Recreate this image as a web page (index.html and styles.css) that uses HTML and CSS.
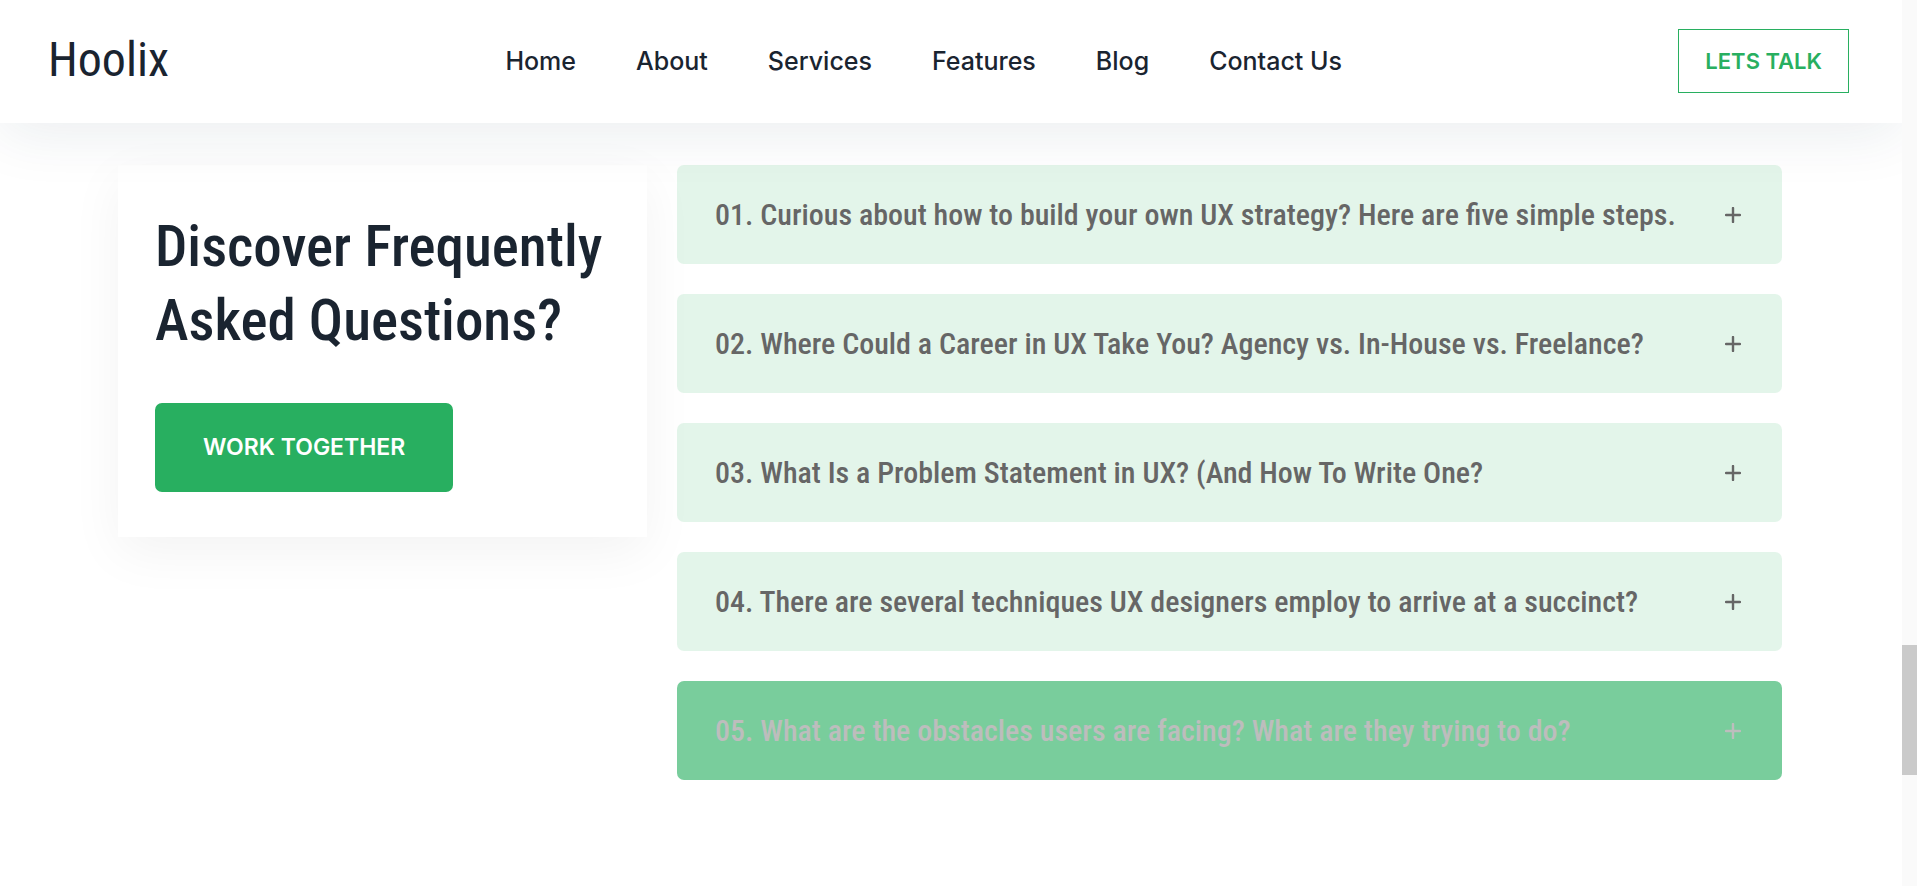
FILE: index.html
```html
<!DOCTYPE html>
<html lang="en">
<head>
<meta charset="utf-8">
<meta name="viewport" content="width=device-width, initial-scale=1">
<title>Hoolix</title>
<link rel="stylesheet" href="styles.css">
</head>
<body>
<div class="page">
  <header class="header">
    <a class="logo" href="#">Hoolix</a>
    <nav class="nav">
      <a href="#">Home</a>
      <a href="#">About</a>
      <a href="#">Services</a>
      <a href="#">Features</a>
      <a href="#">Blog</a>
      <a href="#">Contact Us</a>
    </nav>
    <a class="talk" href="#">LETS TALK</a>
  </header>
  <main class="faq">
    <section class="intro">
      <h2 class="title">Discover Frequently Asked Questions?</h2>
      <a class="cta" href="#">WORK TOGETHER</a>
    </section>
    <section class="list">
      <button class="item" type="button"><span>01. Curious about how to build your own UX strategy? Here are five simple steps.</span><svg class="plus" viewBox="0 0 16 16" aria-hidden="true"><path d="M8 1v14M1 8h14"/></svg></button>
      <button class="item" type="button"><span>02. Where Could a Career in UX Take You? Agency vs. In-House vs. Freelance?</span><svg class="plus" viewBox="0 0 16 16" aria-hidden="true"><path d="M8 1v14M1 8h14"/></svg></button>
      <button class="item" type="button"><span>03. What Is a Problem Statement in UX? (And How To Write One?</span><svg class="plus" viewBox="0 0 16 16" aria-hidden="true"><path d="M8 1v14M1 8h14"/></svg></button>
      <button class="item" type="button"><span>04. There are several techniques UX designers employ to arrive at a succinct?</span><svg class="plus" viewBox="0 0 16 16" aria-hidden="true"><path d="M8 1v14M1 8h14"/></svg></button>
      <button class="item item-active" type="button"><span>05. What are the obstacles users are facing? What are they trying to do?</span><svg class="plus" viewBox="0 0 16 16" aria-hidden="true"><path d="M8 1v14M1 8h14"/></svg></button>
    </section>
  </main>
</div>
<div class="track"><div class="thumb"></div></div>
</body>
</html>
```
FILE: styles.css
```css
* { box-sizing: border-box; }
body {
  margin: 0;
  display: flex;
  min-height: 100vh;
  background: #fff;
  color: #1a2430;
  font-family: "Inter", sans-serif;
}
a { color: inherit; text-decoration: none; }
.page { flex: 1; min-width: 0; overflow: hidden; }
.header {
  position: relative;
  z-index: 1;
  display: flex;
  justify-content: space-between;
  align-items: center;
  padding: 29px 53px 30px 48px;
  background: #fff;
  box-shadow: 0 10px 60px rgba(20, 60, 80, 0.09);
}
.logo {
  padding-bottom: 2px;
  font-family: "Roboto Condensed", "Roboto", sans-serif;
  font-size: 48px;
  line-height: 60px;
}
.nav {
  display: flex;
  gap: 60px;
  font-size: 25px;
  line-height: 36px;
  font-weight: 500;
}
.talk {
  padding: 13px 26px;
  border: 1px solid #28af60;
  color: #28af60;
  font-size: 22px;
  line-height: 36px;
  font-weight: 600;
}
.faq {
  display: grid;
  grid-template-columns: 529fr 1105fr;
  gap: 30px;
  align-items: start;
  padding: 42px 120px 106px 118px;
}
.intro {
  padding: 45px 37px 45px;
  background: #fff;
  box-shadow: 0 15px 50px rgba(0, 0, 0, 0.05);
}
.title {
  margin: 0 0 45px;
  font-family: "Roboto Condensed", "Roboto", sans-serif;
  font-size: 57px;
  line-height: 74px;
  font-weight: 500;
}
.cta {
  display: inline-block;
  padding: 26px 48px 27px;
  border-radius: 7px;
  background: #28af60;
  color: #fff;
  font-size: 23px;
  line-height: 36px;
  font-weight: 600;
  vertical-align: top;
}
.list { display: grid; gap: 30px; }
.item {
  display: flex;
  align-items: center;
  justify-content: space-between;
  min-height: 99px;
  padding: 0 41px 0 38px;
  border: 0;
  border-radius: 7px;
  background: rgba(40, 175, 96, 0.13);
  color: #666;
  font-family: "Roboto Condensed", "Roboto", sans-serif;
  font-size: 30px;
  line-height: 40px;
  font-weight: 500;
  text-align: left;
  cursor: pointer;
}
.item-active { background: #79cd9c; color: #bdbdbd; }
.plus { flex: none; width: 16px; height: 16px; stroke: currentColor; stroke-width: 2.4; stroke-linecap: round; fill: none; }
.track { width: 15px; padding-top: 645px; background: #fafafa; }
.thumb { height: 130px; background: #cacaca; }
```
